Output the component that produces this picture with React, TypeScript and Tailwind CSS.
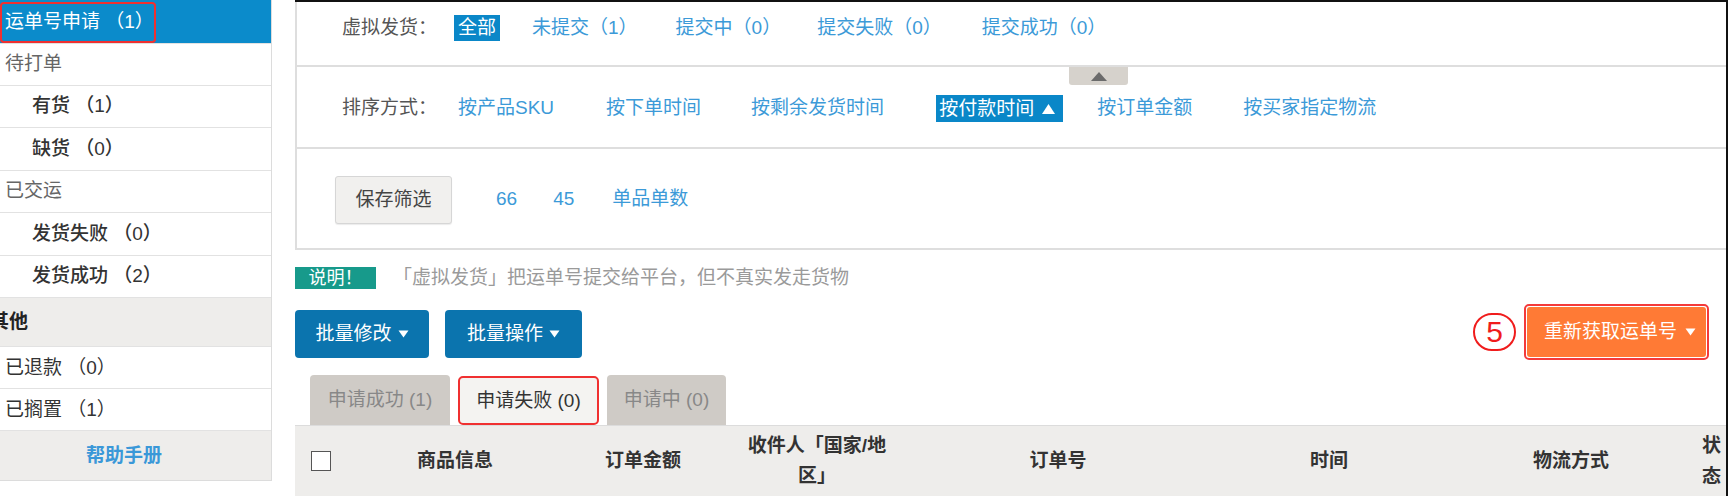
import React from 'react';

const sideRows: { label: string; kind: 'top' | 'sub' }[] = [
  { label: '待打单', kind: 'top' },
  { label: '有货 （1）', kind: 'sub' },
  { label: '缺货 （0）', kind: 'sub' },
  { label: '已交运', kind: 'top' },
  { label: '发货失败 （0）', kind: 'sub' },
  { label: '发货成功 （2）', kind: 'sub' },
];

const Sidebar: React.FC = () => (
  <div className="w-[272px] shrink-0 h-[481px] border-r border-b border-[#dcdcdc] flex flex-col">
    <div className="relative h-[43px] bg-[#0b8bcb] text-white flex items-center pl-[5px]">
      <span>运单号申请 （1）</span>
      <div className="absolute left-0 top-[2px] w-[156px] h-[41px] border-2 border-[#f03030] rounded-[4px]" />
    </div>
    {sideRows.map((r, i) => (
      <div
        key={r.label}
        className={`h-[42.5px] border-b border-[#e2e2e2] flex items-center ${
          r.kind === 'sub' ? 'pl-[32px] text-[#333] font-medium' : 'pl-[5px] text-[#666]'
        } ${i === 0 ? 'border-t' : ''}`}
      >
        {r.label}
      </div>
    ))}
    <div className="h-[49px] bg-[#eeedeb] border-b border-[#e2e2e2] flex items-center font-bold text-[#222] -ml-[10px]">
      其他
    </div>
    <div className="h-[42px] border-b border-[#e2e2e2] flex items-center pl-[5px] text-[#333]">已退款 （0）</div>
    <div className="h-[42px] border-b border-[#e2e2e2] flex items-center pl-[5px] text-[#333]">已搁置 （1）</div>
    <div className="flex-1 bg-[#eeedeb] flex items-center pl-[86px] text-[#3a98d8] font-semibold">帮助手册</div>
  </div>
);

const Caret: React.FC<{ className?: string }> = ({ className }) => (
  <svg width="11" height="8" viewBox="0 0 11 8" className={className}>
    <path d="M0.5 0.5 L10.5 0.5 L5.5 7.5 Z" fill="currentColor" />
  </svg>
);

const FilterPanel: React.FC = () => (
  <div className="relative border-l-2 border-b-2 border-[#dedede]">
    <div className="h-[65px] border-b-2 border-[#dedede] flex items-start pt-[13px] pl-[45px] leading-[26px]">
      <span className="text-[#555]">虚拟发货：</span>
      <span className="ml-[17px] px-[4px] bg-[#0a87c8] text-white">全部</span>
      <span className="ml-[32px] text-[#3c9ad8]">未提交（1）</span>
      <span className="ml-[38px] text-[#3c9ad8]">提交中（0）</span>
      <span className="ml-[36px] text-[#3c9ad8]">提交失败（0）</span>
      <span className="ml-[40px] text-[#3c9ad8]">提交成功（0）</span>
    </div>
    <div className="absolute left-[772px] top-[65px] w-[59px] h-[18px] bg-[#d6d2cc] rounded-b-[3px] flex items-center justify-center">
      <svg width="16" height="9" viewBox="0 0 16 9">
        <path d="M0 9 L8 0 L16 9 Z" fill="#6b6b6b" />
      </svg>
    </div>
    <div className="h-[82px] border-b-2 border-[#dedede] flex items-start pt-[28px] pl-[45px] leading-[26px]">
      <span className="text-[#555]">排序方式：</span>
      <span className="ml-[21px] text-[#3c9ad8]">按产品SKU</span>
      <span className="ml-[52px] text-[#3c9ad8]">按下单时间</span>
      <span className="ml-[50px] text-[#3c9ad8]">按剩余发货时间</span>
      <span className="ml-[52px] pl-[3px] pr-[8px] bg-[#0a87c8] text-white flex items-center h-[27px] gap-[8px]">
        按付款时间
        <svg width="13" height="10" viewBox="0 0 13 10">
          <path d="M0 10 L6.5 0 L13 10 Z" fill="white" />
        </svg>
      </span>
      <span className="ml-[34px] text-[#3c9ad8]">按订单金额</span>
      <span className="ml-[51px] text-[#3c9ad8]">按买家指定物流</span>
    </div>
    <div className="h-[99px] flex items-start pt-[27px] pl-[38px]">
      <button className="w-[117px] h-[48px] bg-[#f1f0ee] border border-[#d6d6d6] rounded-[3px] text-[#444] shadow-[0_1px_1px_rgba(0,0,0,0.08)]">
        保存筛选
      </button>
      <span className="ml-[44px] mt-[10px] text-[#3c9ad8]">66</span>
      <span className="ml-[36px] mt-[10px] text-[#3c9ad8]">45</span>
      <span className="ml-[38px] mt-[10px] text-[#3c9ad8]">单品单数</span>
    </div>
  </div>
);

const columns = [
  { label: '商品信息', w: 'w-[190px]' },
  { label: '订单金额', w: 'w-[186px]' },
];

const TableHeader: React.FC = () => (
  <div className="h-[84px] bg-[#eeedeb] border-t border-[#dcdcdc] flex items-center font-bold text-[#333]">
    <div className="w-[65px] pl-[16px] flex items-center">
      <div className="w-[20px] h-[20px] bg-white border-[1.5px] border-[#555]" />
    </div>
    {columns.map((c) => (
      <div key={c.label} className={`${c.w} text-center`}>
        {c.label}
      </div>
    ))}
    <div className="w-[162px] text-center leading-[30px]">
      <div>收件人「国家/地</div>
      <div>区」</div>
    </div>
    <div className="w-[320px] text-center">订单号</div>
    <div className="w-[222px] text-center">时间</div>
    <div className="w-[262px] text-center">物流方式</div>
    <div className="w-[24px] text-left leading-[31px]">
      <div>状</div>
      <div>态</div>
    </div>
  </div>
);

export default function App() {
  return (
    <div className="w-[1728px] h-[496px] overflow-hidden bg-white flex text-[19px] leading-[26px] font-['Liberation_Sans','Noto_Sans_CJK_SC',sans-serif]">
      <Sidebar />
      <div className="ml-[23px] flex-1 min-w-0 flex flex-col border-r-2 border-t-2 border-[#111]">
        <FilterPanel />

        <div className="mt-[17px] flex items-center h-[22px]">
          <span className="w-[81px] h-[22px] bg-[#179a8b] text-white flex items-center justify-center text-[18px]">说明！</span>
          <span className="ml-[17px] text-[#9a9a9a]">「虚拟发货」把运单号提交给平台，但不真实发走货物</span>
        </div>

        <div className="mt-[15px] flex items-center justify-between pr-[17px]">
          <div className="flex gap-[16px] mt-[4px]">
            <button className="w-[134px] h-[48px] bg-[#0b74ae] text-white rounded-[4px] flex items-center justify-center gap-[6px]">
              批量修改
              <Caret />
            </button>
            <button className="w-[137px] h-[48px] bg-[#0b74ae] text-white rounded-[4px] flex items-center justify-center gap-[6px]">
              批量操作
              <Caret />
            </button>
          </div>
          <div className="flex items-center gap-[8px]">
            <div className="w-[43px] h-[38px] rounded-full border-2 border-[#f01c1c] text-[#f01c1c] flex items-center justify-center text-[30px] leading-none">
              5
            </div>
            <div className="h-[56px] border-2 border-[#f43a3a] rounded-[5px] p-[1px]">
              <div className="h-full pl-[17px] pr-[10px] bg-[#ff7a35] rounded-[3px] text-white flex items-center gap-[8px]">
                重新获取运单号
                <Caret />
              </div>
            </div>
          </div>
        </div>

        <div className="mt-[15px] flex items-end gap-[8px] pl-[15px] h-[50px]">
          <div className="w-[140px] h-[50px] bg-[#cfcbc6] text-[#888] rounded-t-[4px] flex items-center justify-center">申请成功 (1)</div>
          <div className="w-[141px] h-[49px] bg-[#f4f3f1] text-[#333] rounded-[5px] border-2 border-[#f03030] flex items-center justify-center">申请失败 (0)</div>
          <div className="w-[119px] h-[50px] bg-[#cfcbc6] text-[#888] rounded-t-[4px] flex items-center justify-center">申请中 (0)</div>
        </div>

        <TableHeader />
      </div>
    </div>
  );
}
